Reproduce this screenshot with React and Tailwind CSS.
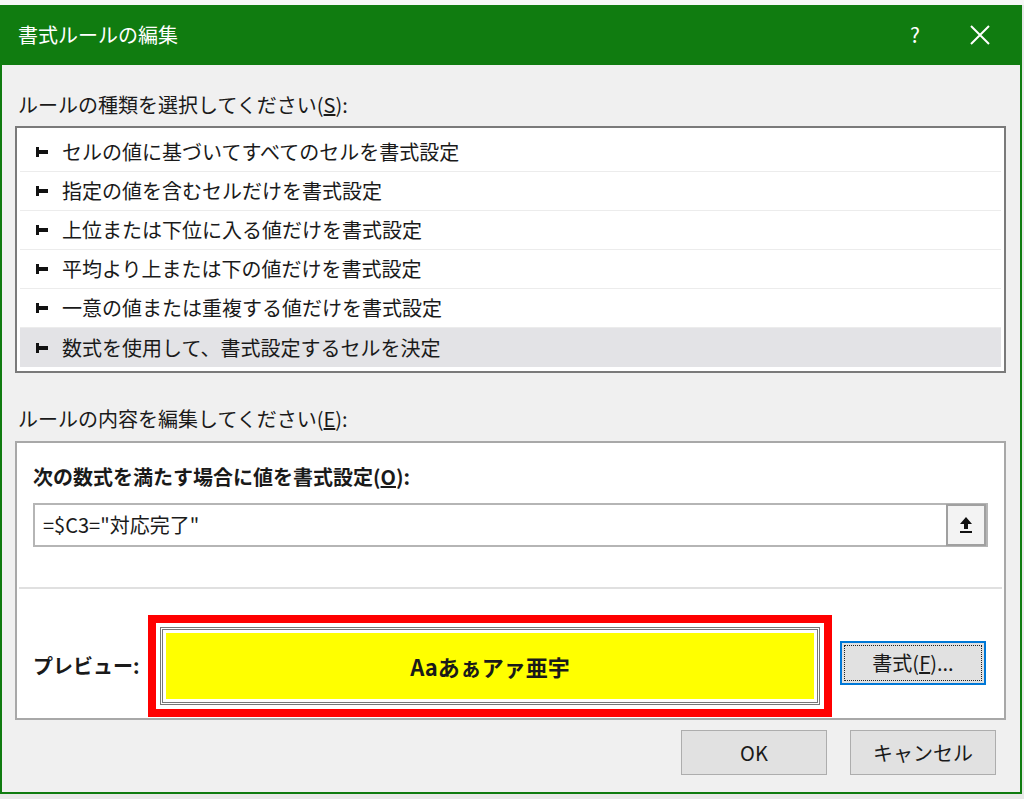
export default function App() {
  const rows = [
    "セルの値に基づいてすべてのセルを書式設定",
    "指定の値を含むセルだけを書式設定",
    "上位または下位に入る値だけを書式設定",
    "平均より上または下の値だけを書式設定",
    "一意の値または重複する値だけを書式設定",
    "数式を使用して、書式設定するセルを決定",
  ];
  const font = { fontFamily: '"Noto Sans CJK JP", "Noto Sans", sans-serif' };
  return (
    <div className="w-[1024px] h-[799px] bg-[#e8e8e8] overflow-hidden text-[#1a1a1a]" style={font}>
      <div className="h-[5px] bg-[#f7f7f7]" />
      <div className="w-[1022px] h-[789px] border-2 border-[#107c10] border-t-0 bg-[#f0f0f0] flex flex-col">
        <div className="h-[60px] bg-[#107c10] flex items-center text-white text-[20px] pl-[16px]">
          <span className="flex-1">書式ルールの編集</span>
          <span className="w-[50px] text-center text-[21px]">?</span>
          <span className="w-[80px] flex justify-center">
            <svg width="22" height="22" viewBox="0 0 22 22"><path d="M2 2L20 20M20 2L2 20" stroke="white" strokeWidth="2" /></svg>
          </span>
        </div>
        <div className="pl-[13px] pr-[14px] flex flex-col">
          <div className="text-[20px] mt-[26px] pl-[3px] leading-[28px]">ルールの種類を選択してください(<u>S</u>):</div>
          <div className="mt-[7px] w-[991px] h-[247px] border-2 border-[#7a7a7a] bg-white pt-[5px] px-[3px]">
            {rows.map((r, i) => (
              <div key={i} className={`h-[39px] flex items-center text-[20px] ${i === 5 ? "bg-[#e3e3e6]" : "border-b border-[#ececec]"}`}>
                <span className="w-[12px] h-[4px] bg-[#111] ml-[16px] mr-[14px] relative">
                  <span className="absolute left-0 top-[-3px] w-[3px] h-[10px] bg-[#111]" />
                </span>
                {r}
              </div>
            ))}
          </div>
          <div className="text-[20px] mt-[32px] pl-[3px] leading-[28px]">ルールの内容を編集してください(<u>E</u>):</div>
          <div className="mt-[8px] w-[991px] h-[279px] border-2 border-[#a8a8a8] bg-white flex flex-col px-[16px]">
            <div className="text-[20px] font-bold mt-[20px] leading-[28px]">次の数式を満たす場合に値を書式設定(<u>O</u>):</div>
            <div className="mt-[12px] h-[44px] w-[955px] border-2 border-[#b5b5b5] flex items-center">
              <span className="flex-1 text-[20px] pl-[8px]">=$C3="対応完了"</span>
              <div className="w-[40px] h-[42px] border-2 border-[#a0a0a0] bg-[#f3f3f3] flex items-center justify-center">
                <svg width="16" height="18" viewBox="0 0 16 18"><path d="M8 1L2 8H6V13H10V8H14Z" fill="#111" /><rect x="2" y="15" width="12" height="2" fill="#111" /></svg>
              </div>
            </div>
            <div className="mt-[40px] -mx-[14px] h-[2px] bg-[#e0e0e0]" />
            <div className="flex items-center mt-[26px]">
              <span className="text-[20px] font-bold w-[115px]">プレビュー:</span>
              <div className="w-[684px] h-[102px] border-[8px] border-[#ff0000] bg-white p-[4px]">
                <div className="w-full h-full border-[3px] border-double border-[#777] p-[3px]">
                  <div className="w-full h-full bg-[#ffff00] flex items-center justify-center text-[22px] font-bold" style={{ fontFamily: '"Noto Sans CJK JP", serif' }}>Aaあぁアァ亜宇</div>
                </div>
              </div>
              <div className="ml-[8px] w-[146px] h-[44px] border-2 border-[#0078d7] bg-[#e1e1e1] p-[2px] self-start mt-[26px]">
                <div className="w-full h-full border border-dotted border-[#222] flex items-center justify-center text-[20px]">書式(<u>F</u>)...</div>
              </div>
            </div>
          </div>
          <div className="flex justify-end gap-[23px] mt-[10px] pr-[10px]">
            <div className="w-[146px] h-[45px] border border-[#adadad] bg-[#e1e1e1] flex items-center justify-center text-[20px]">OK</div>
            <div className="w-[146px] h-[45px] border border-[#adadad] bg-[#e1e1e1] flex items-center justify-center text-[20px]">キャンセル</div>
          </div>
        </div>
      </div>
    </div>
  );
}
